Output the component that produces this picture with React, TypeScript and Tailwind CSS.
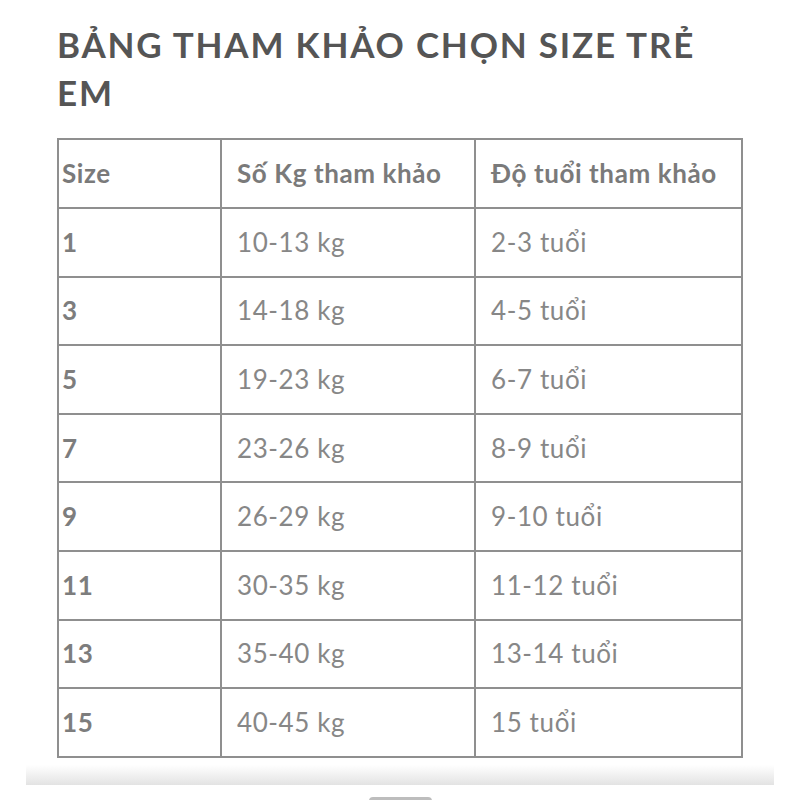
const rows = [
  ["1", "10-13 kg", "2-3 tuổi"],
  ["3", "14-18 kg", "4-5 tuổi"],
  ["5", "19-23 kg", "6-7 tuổi"],
  ["7", "23-26 kg", "8-9 tuổi"],
  ["9", "26-29 kg", "9-10 tuổi"],
  ["11", "30-35 kg", "11-12 tuổi"],
  ["13", "35-40 kg", "13-14 tuổi"],
  ["15", "40-45 kg", "15 tuổi"],
];

const App = () => {
  return (
    <div className="h-[800px] w-[800px] overflow-hidden bg-white font-[Lato,sans-serif]">
      {/* TITLE */}
      <div className="px-[57px] pt-[20px]">
        <h1 className="w-[686px] text-[35px] font-bold leading-[48px] tracking-[1.8px] text-[#555555]">
          BẢNG THAM KHẢO CHỌN SIZE TRẺ EM
        </h1>
      </div>

      {/* TABLE */}
      <div className="mt-[22px] px-[57px]">
        <table className="w-[684px] table-fixed border-collapse border-2 border-[#8f8f8f] text-[26px] tracking-[0.6px]">
          <colgroup>
            <col className="w-[163px]" />
            <col className="w-[254px]" />
            <col className="w-[267px]" />
          </colgroup>
          <thead>
            <tr className="h-[69px]">
              <th className="border-2 border-[#8f8f8f] pl-[3px] text-left font-bold text-[#7a7a7a]">
                Size
              </th>
              <th className="border-2 border-[#8f8f8f] pl-[15px] text-left font-bold text-[#7a7a7a]">
                Số Kg tham khảo
              </th>
              <th className="border-2 border-[#8f8f8f] pl-[15px] text-left font-bold text-[#7a7a7a]">
                Độ tuổi tham khảo
              </th>
            </tr>
          </thead>
          <tbody>
            {rows.map((row) => (
              <tr key={row[0]} className="h-[68.6px]">
                <td className="border-2 border-[#8f8f8f] pl-[3px] font-bold text-[#7d7d7d]">
                  {row[0]}
                </td>
                <td className="border-2 border-[#8f8f8f] pl-[15px] text-[#878787]">
                  {row[1]}
                </td>
                <td className="border-2 border-[#8f8f8f] pl-[15px] text-[#878787]">
                  {row[2]}
                </td>
              </tr>
            ))}
          </tbody>
        </table>
      </div>

      {/* BOTTOM SHEET EDGE */}
      <div className="mx-[26px] mt-[7px] h-[20px] bg-gradient-to-b from-white to-[#e3e3e3]" />
      <div className="mt-[12px] flex justify-center">
        <div className="h-[8px] w-[63px] rounded-full bg-[#bdbdbd]" />
      </div>
    </div>
  );
};

export default App;
